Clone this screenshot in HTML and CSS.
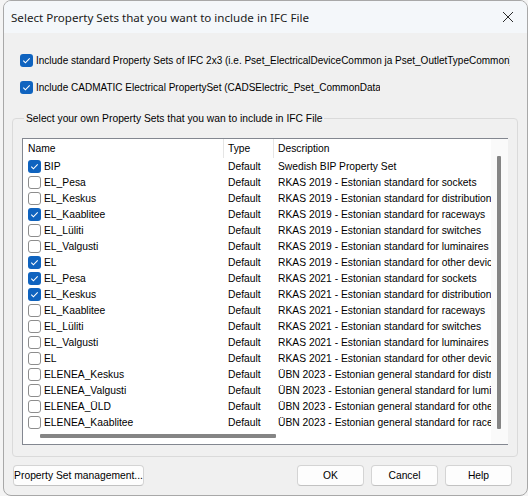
FILE: index.html
```html
<!DOCTYPE html>
<html>
<head>
<meta charset="utf-8">
<link rel="stylesheet" href="styles.css">
</head>
<body>
<div class="window">
  <div class="titlebar">
    <span class="title">Select Property Sets that you want to include in IFC File</span>
    <svg class="close" width="12" height="12" viewBox="0 0 12 12"><path d="M1 1 L11 11 M11 1 L1 11" stroke="#2b2b2b" stroke-width="1" fill="none"/></svg>
  </div>
  <div class="content">
    <div class="opt opt1">
      <span class="cb on"><svg viewBox="0 0 13 13"><path d="M3.3 6.7 L5.4 8.8 L9.7 4.4" stroke="#fff" stroke-width="1.1" fill="none"/></svg></span>
      <span class="optlbl w1">Include standard Property Sets of IFC 2x3 (i.e. Pset_ElectricalDeviceCommon ja Pset_OutletTypeCommon)</span>
    </div>
    <div class="opt opt2">
      <span class="cb on"><svg viewBox="0 0 13 13"><path d="M3.3 6.7 L5.4 8.8 L9.7 4.4" stroke="#fff" stroke-width="1.1" fill="none"/></svg></span>
      <span class="optlbl w2">Include CADMATIC Electrical PropertySet (CADSElectric_Pset_CommonData)</span>
    </div>
    <fieldset class="group">
      <legend>Select your own Property Sets that you wan to include in IFC File</legend>
      <div class="list">
        <div class="main">
          <div class="header">
            <div class="c1 hc">Name</div>
            <div class="c2 hc">Type</div>
            <div class="c3 hc">Description</div>
          </div>
          <div class="rows" id="rows"></div>
          <div class="hscroll"><div class="hthumb"></div></div>
        </div>
        <div class="vscroll"><div class="vthumb"></div></div>
      </div>
    </fieldset>
    <div class="buttons">
      <button class="btn mgmt">Property Set management...</button>
      <span class="spacer"></span>
      <button class="btn std">OK</button>
      <button class="btn std">Cancel</button>
      <button class="btn std">Help</button>
    </div>
  </div>
</div>
<script src="app.js"></script>
</body>
</html>
```
FILE: app.js
```js
var data = [
  ["BIP", 1, "Swedish BIP Property Set"],
  ["EL_Pesa", 0, "RKAS 2019 - Estonian standard for sockets"],
  ["EL_Keskus", 0, "RKAS 2019 - Estonian standard for distribution"],
  ["EL_Kaablitee", 1, "RKAS 2019 - Estonian standard for raceways"],
  ["EL_Lüliti", 0, "RKAS 2019 - Estonian standard for switches"],
  ["EL_Valgusti", 0, "RKAS 2019 - Estonian standard for luminaires"],
  ["EL", 1, "RKAS 2019 - Estonian standard for other devices"],
  ["EL_Pesa", 1, "RKAS 2021 - Estonian standard for sockets"],
  ["EL_Keskus", 1, "RKAS 2021 - Estonian standard for distribution"],
  ["EL_Kaablitee", 0, "RKAS 2021 - Estonian standard for raceways"],
  ["EL_Lüliti", 0, "RKAS 2021 - Estonian standard for switches"],
  ["EL_Valgusti", 0, "RKAS 2021 - Estonian standard for luminaires"],
  ["EL", 0, "RKAS 2021 - Estonian standard for other devices"],
  ["ELENEA_Keskus", 0, "ÜBN 2023 - Estonian general standard for distribution"],
  ["ELENEA_Valgusti", 0, "ÜBN 2023 - Estonian general standard for luminaires"],
  ["ELENEA_ÜLD", 0, "ÜBN 2023 - Estonian general standard for other devices"],
  ["ELENEA_Kaablitee", 0, "ÜBN 2023 - Estonian general standard for raceways"]
];
var check = '<svg viewBox="0 0 13 13"><path d="M3.3 6.7 L5.4 8.8 L9.7 4.4" stroke="#fff" stroke-width="1.1" fill="none"/></svg>';
var html = "";
data.forEach(function (d) {
  html += '<div class="row"><div class="c1"><span class="cb ' + (d[1] ? 'on">' + check : 'off">') + '</span><span class="nm">' + d[0] + '</span></div><div class="c2">Default</div><div class="c3">' + d[2] + '</div></div>';
});
document.getElementById("rows").innerHTML = html;
```
FILE: styles.css
```css
html, body {
  margin: 0;
  padding: 0;
}
body {
  background: #f4f4f4;
  width: 528px;
  height: 496px;
  overflow: hidden;
  font-family: "Liberation Sans", Arial, sans-serif;
  font-size: 10.3px;
  color: #000;
}
.window {
  margin-left: 3px;
  width: 523px;
  height: 494px;
  border: 1px solid #a8a8a8;
  border-radius: 8px;
  background: #f0f0f0;
  overflow: hidden;
  display: flex;
  flex-direction: column;
}
.titlebar {
  height: 32px;
  flex: none;
  background: #f4f7fa;
  display: flex;
  align-items: center;
  padding-left: 7px;
  padding-right: 13px;
}
.title {
  font-family: "Noto Sans", sans-serif;
  font-size: 11.6px;
  color: #1b1b1b;
  flex: 1;
  white-space: nowrap;
}
.close {
  flex: none;
}
.content {
  flex: 1;
  display: flex;
  flex-direction: column;
}
.opt {
  display: flex;
  align-items: center;
  height: 16px;
  padding-left: 16px;
  white-space: nowrap;
}
.opt1 { margin-top: 19px; }
.opt2 { margin-top: 11px; }
.optlbl {
  overflow: hidden;
  margin-left: 3px;
  font-size: 10px;
}
.w1 { width: 474px; }
.w2 { width: 344px; }
.cb {
  flex: none;
  width: 13px;
  height: 13px;
  box-sizing: border-box;
  border-radius: 3px;
  display: inline-block;
}
.cb svg { display: block; width: 13px; height: 13px; }
.cb.on { background: #0f63bf; }
.cb.off { background: #fff; border: 1px solid #8d8d8d; }
.group {
  margin: 17px 9px 0 8px;
  padding: 13px 9px 11px 9px;
  border: 1px solid #dadada;
  border-radius: 4px;
  min-width: 0;
}
.group legend {
  padding: 0 2px;
  margin-left: 2px;
  line-height: 13px;
}
.list {
  height: 307px;
  box-sizing: border-box;
  border: 1px solid #838790;
  background: #fff;
  display: flex;
}
.main {
  width: 468px;
  flex: none;
  display: flex;
  flex-direction: column;
  overflow: hidden;
  white-space: nowrap;
}
.header {
  height: 19px;
  flex: none;
  display: flex;
  align-items: stretch;
}
.hc {
  display: flex;
  align-items: center;
}
.header .c1, .header .c2 { border-right: 1px solid #e5e5e5; }
.c1 {
  width: 195px;
  flex: none;
  padding-left: 5px;
  display: flex;
  align-items: center;
}
.c2 {
  width: 45px;
  flex: none;
  padding-left: 4px;
}
.c3 {
  flex: none;
  padding-left: 4px;
}
.rows {
  height: 271px;
  flex: none;
  overflow: hidden;
}
.row {
  height: 16px;
  display: flex;
  align-items: center;
}
.row .c1 { width: 196px; }
.row .c2 { width: 46px; }
.nm { margin-left: 3px; }
.hscroll {
  height: 15px;
  flex: none;
  padding-top: 5px;
  box-sizing: border-box;
}
.hthumb {
  margin-left: 17px;
  width: 236px;
  height: 4px;
  background: #858585;
  border-radius: 1px;
}
.vscroll {
  width: 17px;
  flex: none;
  background: #fafafa;
  padding-top: 17px;
  box-sizing: border-box;
}
.vthumb {
  margin-left: 6px;
  width: 4px;
  height: 273px;
  background: #858585;
  border-radius: 1px;
}
.buttons {
  display: flex;
  margin: 8px 15px 0 9px;
  gap: 7px;
}
.spacer { flex: 1; }
.btn {
  font-family: "Liberation Sans", Arial, sans-serif;
  font-size: 10.3px;
  color: #000;
  height: 21px;
  padding: 0;
  background: #fdfdfd;
  border: 1px solid #d4d4d4;
  border-bottom-color: #c2c2c2;
  border-radius: 4px;
}
.mgmt { width: 131px; }
.std { width: 67px; }
```
